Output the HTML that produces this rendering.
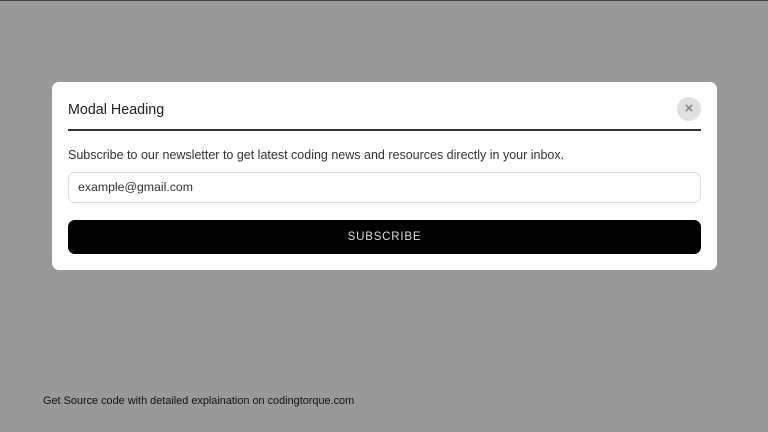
<!DOCTYPE html>
<html><head><style>
*{margin:0;padding:0;box-sizing:border-box}
body{width:768px;height:432px;background:#999;font-family:"Liberation Sans",sans-serif;position:relative;overflow:hidden;border-top:1px solid #444}
.m{position:absolute;left:52px;top:81px;width:665px;height:188px;background:#fff;border-radius:7px}
.h{position:absolute;left:16px;top:20px;font-size:14.3px;color:#222}
.x{position:absolute;left:625px;top:15px;width:24px;height:24px;border-radius:50%;background:#e0e0e0;color:#888;font-size:15px;font-weight:bold;text-align:center;line-height:24px}
.l{position:absolute;left:16px;top:47px;width:633px;height:2px;background:#333}
.p{position:absolute;left:16px;top:66px;font-size:12.5px;color:#333}
.i{position:absolute;left:16px;top:90px;width:633px;height:31px;border:1px solid #ddd;border-radius:7px;font-size:12.3px;color:#333;padding-left:9px;line-height:29px}
.b{position:absolute;left:16px;top:138px;width:633px;height:34px;background:#000;border-radius:7px;color:#ddd;font-size:11.5px;letter-spacing:0.8px;text-align:center;line-height:34px}
.f{position:absolute;left:43px;top:394px;font-size:10.9px;color:#111}
</style></head><body>
<div class="m">
<div class="h">Modal Heading</div>
<div class="x">×</div>
<div class="l"></div>
<div class="p">Subscribe to our newsletter to get latest coding news and resources directly in your inbox.</div>
<div class="i">example@gmail.com</div>
<div class="b">SUBSCRIBE</div>
</div>
<div class="f">Get Source code with detailed explaination on codingtorque.com</div>
</body></html>
